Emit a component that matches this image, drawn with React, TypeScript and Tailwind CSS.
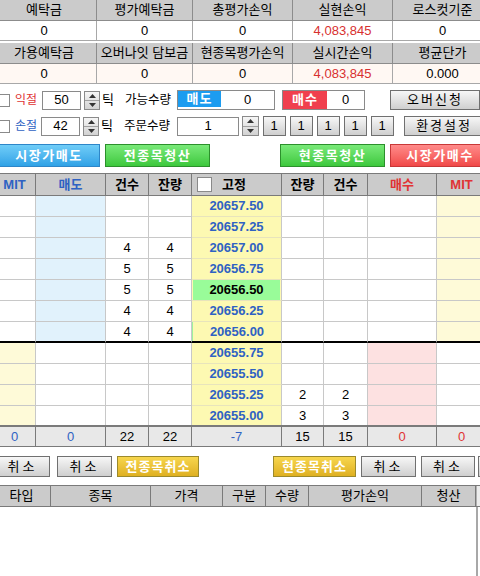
import React from 'react';

const FONT = "font-['Liberation_Sans','Noto_Sans_CJK_KR',sans-serif]";
const BLUE = 'text-[#2f62c3]';
const RED = 'text-[#e03434]';

function Spin({ h = 'h-[19px]', w = 'w-[16px]' }: { h?: string; w?: string }) {
  return (
    <div className={`flex flex-col ${w} ${h} border border-[#8a8a8a] bg-linear-to-b from-[#f6f6f6] to-[#d2d2d2] shrink-0`}>
      <div className="flex-1 flex items-center justify-center border-b border-[#a0a0a0]">
        <svg width="7" height="4" viewBox="0 0 7 4"><path d="M0 4 L3.5 0 L7 4Z" fill="#333" /></svg>
      </div>
      <div className="flex-1 flex items-center justify-center">
        <svg width="7" height="4" viewBox="0 0 7 4"><path d="M0 0 L3.5 4 L7 0Z" fill="#333" /></svg>
      </div>
    </div>
  );
}

function Check({ cls = '' }: { cls?: string }) {
  return <div className={`w-[13px] h-[13px] bg-white border border-[#8a8a8a] shrink-0 ${cls}`} />;
}

function GrayBtn({ children, cls }: { children: React.ReactNode; cls: string }) {
  return (
    <div className={`flex items-center justify-center border border-[#707070] bg-linear-to-b from-[#f7f7f7] to-[#cfcfcf] text-[13px] text-black tracking-[1px] shrink-0 ${cls}`}>
      {children}
    </div>
  );
}

function InfoTable({ heads, vals, valBg }: { heads: string[]; vals: { t: string; red?: boolean }[]; valBg: string }) {
  return (
    <div className="grid grid-cols-[105px_96px_100px_100px_100px] ml-[-8px] w-[501px] whitespace-nowrap">
      {heads.map((h, i) => (
        <div key={'h' + i} className="h-[21px] bg-[#cbcbcb] border-r border-b border-[#8c8c8c] flex items-center justify-center text-[13px] text-black">
          {h}
        </div>
      ))}
      {vals.map((v, i) => (
        <div key={'v' + i} className={`h-[20px] ${valBg} border-r border-b border-[#a8a8a8] flex items-center justify-center text-[13px] ${v.red ? 'text-[#d83030]' : 'text-black'}`}>
          {v.t}
        </div>
      ))}
    </div>
  );
}

const GRID = 'grid grid-cols-[42px_70px_43px_43px_90px_42px_44px_69px_50px]';

type Row = { p: string; sc?: string; sq?: string; bq?: string; bc?: string; cur?: boolean };
const upper: Row[] = [
  { p: '20657.50' },
  { p: '20657.25' },
  { p: '20657.00', sc: '4', sq: '4' },
  { p: '20656.75', sc: '5', sq: '5' },
  { p: '20656.50', sc: '5', sq: '5', cur: true },
  { p: '20656.25', sc: '4', sq: '4' },
  { p: '20656.00', sc: '4', sq: '4' },
];
const lower: Row[] = [
  { p: '20655.75' },
  { p: '20655.50' },
  { p: '20655.25', bq: '2', bc: '2' },
  { p: '20655.00', bq: '3', bc: '3' },
];

function Cell({ bg = 'bg-white', children, bb = 'border-b border-[#c8c8c8]', cls = '' }: { bg?: string; children?: React.ReactNode; bb?: string; cls?: string }) {
  return (
    <div className={`h-[21px] border-r border-r-[#c8c8c8] ${bb} ${bg} flex items-center justify-center text-[13px] text-black ${cls}`}>
      {children}
    </div>
  );
}

function BookRow({ r, side, last }: { r: Row; side: 'sell' | 'buy'; last?: boolean }) {
  const bb = last ? 'border-b-2 border-b-black' : 'border-b border-b-[#c8c8c8]';
  const sell = side === 'sell';
  return (
    <div className={GRID}>
      <Cell bb={bb} bg={sell ? 'bg-white' : 'bg-[#fefad8]'} />
      <Cell bb={bb} bg={sell ? 'bg-[#e1f2fc]' : 'bg-white'} />
      <Cell bb={bb}>{r.sc}</Cell>
      <Cell bb={bb}>{r.sq}</Cell>
      <div className={`h-[21px] border-r border-r-[#c8c8c8] ${last ? 'border-b-2 border-b-black' : 'border-b border-b-[#e8e4bc]'} bg-[#fdf9b2] flex items-stretch`}>
        {r.cur ? (
          <div className="flex-1 mx-[1px] bg-[#99fc99] flex items-center justify-center text-[13px] font-bold text-black">{r.p}</div>
        ) : (
          <div className={`flex-1 flex items-center justify-center text-[13px] font-bold ${BLUE} ${r.p === '20656.00' ? 'border-l border-l-[#9ef09e]' : ''}`}>{r.p}</div>
        )}
      </div>
      <Cell bb={bb}>{r.bq}</Cell>
      <Cell bb={bb}>{r.bc}</Cell>
      <Cell bb={bb} bg={sell ? 'bg-white' : 'bg-[#fde1e1]'} />
      <Cell bb={bb} bg={sell ? 'bg-[#fefad8]' : 'bg-white'} />
    </div>
  );
}

function HeadCell({ children, cls = '' }: { children?: React.ReactNode; cls?: string }) {
  return (
    <div className={`h-[21px] border-r border-[#7a7a7a] bg-[#cbcbcb] flex items-center justify-center text-[13px] font-bold ${cls}`}>
      {children}
    </div>
  );
}

function FootCell({ children, cls = '' }: { children?: React.ReactNode; cls?: string }) {
  return (
    <div className={`h-[19px] border-r border-[#7a7a7a] bg-[#e8e8e8] flex items-center justify-center text-[13px] ${cls}`}>
      {children}
    </div>
  );
}

export default function App() {
  return (
    <div className={`w-[480px] h-[576px] overflow-hidden bg-white ${FONT} text-black`}>
      {/* Info tables */}
      <InfoTable
        heads={['예탁금', '평가예탁금', '총평가손익', '실현손익', '로스컷기준']}
        vals={[{ t: '0' }, { t: '0' }, { t: '0' }, { t: '4,083,845', red: true }, { t: '0' }]}
        valBg="bg-white"
      />
      <div className="h-[2px]" />
      <InfoTable
        heads={['가용예탁금', '오버나잇 담보금', '현종목평가손익', '실시간손익', '평균단가']}
        vals={[{ t: '0' }, { t: '0' }, { t: '0' }, { t: '4,083,845', red: true }, { t: '0.000' }]}
        valBg="bg-[#fff8f3]"
      />

      {/* Control row 1 */}
      <div className="flex items-center h-[20px] mt-[6px] whitespace-nowrap">
        <Check cls="ml-[-3px]" />
        <span className="ml-[5px] w-[24px] text-[12px] text-[#e03434]">익절</span>
        <div className="ml-[4px] w-[39px] h-[19px] border border-[#8a8a8a] bg-white flex items-center justify-center text-[13px] shrink-0">50</div>
        <div className="ml-[3px]"><Spin /></div>
        <span className="ml-[2px] w-[12px] text-[13px]">틱</span>
        <span className="ml-[11px] w-[49px] text-[12.5px]">가능수량</span>
        <div className="ml-[5px] w-[98px] h-[20px] border border-[#8a8a8a] bg-white flex shrink-0">
          <div className="w-[43px] mb-[2px] bg-[#1c9cf0] text-white font-bold text-[13px] flex items-center justify-center tracking-[1px]">매도</div>
          <div className="flex-1 flex items-center justify-center text-[13px]">0</div>
        </div>
        <div className="ml-[7px] w-[83px] h-[20px] border border-[#8a8a8a] bg-white flex shrink-0">
          <div className="w-[44px] bg-[#f0404e] text-white font-bold text-[13px] flex items-center justify-center tracking-[1px]">매수</div>
          <div className="flex-1 flex items-center justify-center text-[13px]">0</div>
        </div>
        <GrayBtn cls="ml-[25px] w-[90px] h-[20px] tracking-[2px]">오버신청</GrayBtn>
      </div>

      {/* Control row 2 */}
      <div className="flex items-center h-[20px] mt-[6px] whitespace-nowrap">
        <Check cls="ml-[-3px]" />
        <span className="ml-[5px] w-[24px] text-[12px] text-[#2f62c3]">손절</span>
        <div className="ml-[4px] w-[39px] h-[19px] border border-[#8a8a8a] bg-white flex items-center justify-center text-[13px] shrink-0">42</div>
        <div className="ml-[3px]"><Spin /></div>
        <span className="ml-[2px] w-[12px] text-[13px]">틱</span>
        <span className="ml-[11px] w-[49px] text-[12.5px]">주문수량</span>
        <div className="ml-[7px] w-[62px] h-[19px] border border-[#8a8a8a] bg-white flex items-center justify-center text-[13px] shrink-0">1</div>
        <div className="ml-[3px]"><Spin w="w-[17px]" h="h-[20px]" /></div>
        <GrayBtn cls="ml-[4px] w-[23px] h-[20px]">1</GrayBtn>
        <GrayBtn cls="ml-[4px] w-[23px] h-[20px]">1</GrayBtn>
        <GrayBtn cls="ml-[4px] w-[23px] h-[20px]">1</GrayBtn>
        <GrayBtn cls="ml-[4px] w-[23px] h-[20px]">1</GrayBtn>
        <GrayBtn cls="ml-[4px] w-[23px] h-[20px]">1</GrayBtn>
        <GrayBtn cls="ml-[10px] w-[80px] h-[20px] tracking-[2px]">환경설정</GrayBtn>
      </div>

      {/* Action buttons */}
      <div className="flex h-[23px] mt-[8px] whitespace-nowrap text-[13px] font-bold text-white tracking-[1.5px]">
        <div className="ml-[-2px] w-[102px] border border-[#2e86c8] bg-linear-to-b from-[#6fcdf8] to-[#2fa2e6] flex items-center justify-center shrink-0">시장가매도</div>
        <div className="ml-[5px] w-[105px] border border-[#2c902c] bg-linear-to-b from-[#78ea78] to-[#3cc83c] flex items-center justify-center shrink-0">전종목청산</div>
        <div className="ml-[70px] w-[105px] border border-[#2c902c] bg-linear-to-b from-[#78ea78] to-[#3cc83c] flex items-center justify-center shrink-0">현종목청산</div>
        <div className="ml-[5px] w-[100px] border border-[#c83838] bg-linear-to-b from-[#ff8a8a] to-[#f04848] flex items-center justify-center shrink-0">시장가매수</div>
      </div>

      {/* Order book */}
      <div className="mt-[6px] ml-[-6px] w-[493px]">
        <div className={`${GRID} border-t border-b border-[#7a7a7a]`}>
          <HeadCell cls={BLUE}>MIT</HeadCell>
          <HeadCell cls={BLUE}>매도</HeadCell>
          <HeadCell>건수</HeadCell>
          <HeadCell>잔량</HeadCell>
          <HeadCell cls="justify-start">
            <div className="ml-[5px] w-[15px] h-[15px] bg-white border border-[#8a8a8a]" />
            <span className="ml-[10px]">고정</span>
          </HeadCell>
          <HeadCell>잔량</HeadCell>
          <HeadCell>건수</HeadCell>
          <HeadCell cls={RED}>매수</HeadCell>
          <HeadCell cls={RED}>MIT</HeadCell>
        </div>
        <div className="h-[229px] overflow-hidden">
          {upper.map((r, i) => (
            <BookRow key={r.p} r={r} side="sell" last={i === upper.length - 1} />
          ))}
          {lower.map((r) => (
            <BookRow key={r.p} r={r} side="buy" />
          ))}
        </div>
        <div className={`${GRID} border-t-2 border-b border-[#7a7a7a]`}>
          <FootCell cls={BLUE}>0</FootCell>
          <FootCell cls={BLUE}>0</FootCell>
          <FootCell>22</FootCell>
          <FootCell>22</FootCell>
          <FootCell cls={BLUE}>-7</FootCell>
          <FootCell>15</FootCell>
          <FootCell>15</FootCell>
          <FootCell cls={RED}>0</FootCell>
          <FootCell cls={RED}>0</FootCell>
        </div>
      </div>

      {/* Cancel buttons */}
      <div className="flex h-[21px] mt-[9px] whitespace-nowrap">
        <GrayBtn cls="ml-[-5px] w-[55px] h-[21px] tracking-[3px]">취소</GrayBtn>
        <GrayBtn cls="ml-[7px] w-[55px] h-[21px] tracking-[3px]">취소</GrayBtn>
        <div className="ml-[5px] w-[82px] border border-[#9c8a2c] bg-linear-to-b from-[#f7d64c] to-[#dfb020] flex items-center justify-center text-[13px] font-bold text-white tracking-[1px] shrink-0">전종목취소</div>
        <div className="ml-[74px] w-[83px] border border-[#9c8a2c] bg-linear-to-b from-[#f7d64c] to-[#dfb020] flex items-center justify-center text-[13px] font-bold text-white tracking-[1px] shrink-0">현종목취소</div>
        <GrayBtn cls="ml-[5px] w-[55px] h-[21px] tracking-[3px]">취소</GrayBtn>
        <GrayBtn cls="ml-[5px] w-[54px] h-[21px] tracking-[3px]">취소</GrayBtn>
        <GrayBtn cls="ml-[3px] w-[20px] h-[21px]"> </GrayBtn>
      </div>

      {/* Positions table */}
      <div className="mt-[8px] ml-[-7px] w-[497px] flex flex-col h-[95px]">
        <div className="grid grid-cols-[58px_100px_72px_43px_43px_113px_54px_14px] border-t border-b border-[#7a7a7a] whitespace-nowrap">
          {['타입', '종목', '가격', '구분', '수량', '평가손익', '청산'].map((h) => (
            <div key={h} className="h-[20px] bg-[#cbcbcb] border-r border-[#7a7a7a] flex items-center justify-center text-[13px]">{h}</div>
          ))}
          <div className="h-[20px] bg-[#ececec] border-l border-[#b0b0b0]" />
        </div>
        <div className="flex-1 grid grid-cols-[483px_14px]">
          <div className="bg-white" />
          <div className="bg-white border-l-2 border-[#a8a8a8]" />
        </div>
      </div>
    </div>
  );
}
